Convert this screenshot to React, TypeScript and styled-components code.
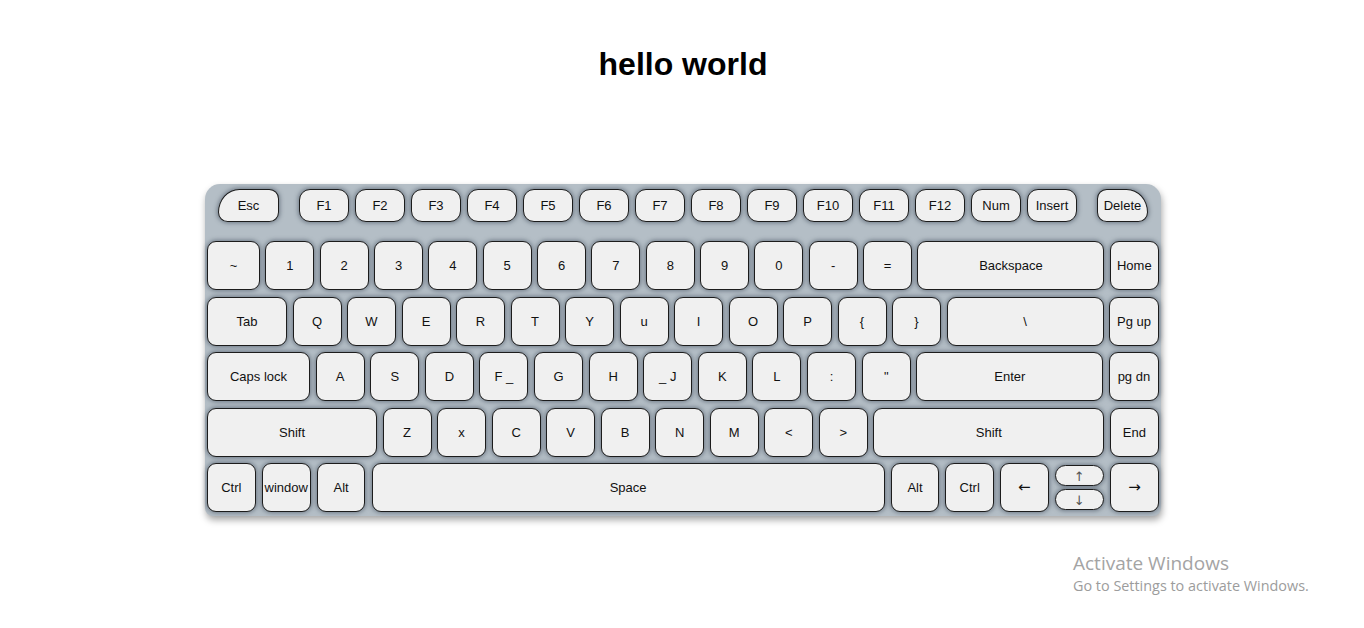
import React from "react";
import styled, { createGlobalStyle, css } from "styled-components";

const GlobalStyle = createGlobalStyle`
  html, body { margin: 0; padding: 0; background: #ffffff; }
  body { font-family: "Liberation Sans", Arial, sans-serif; color: #000; }
  * { box-sizing: border-box; }
`;

const Page = styled.div`
  position: relative;
  width: 100%;
  height: 628px;
  overflow: hidden;
  display: flex;
  flex-direction: column;
  align-items: center;
`;

const Title = styled.h1`
  margin: 46px 0 0 2px;
  font-size: 32px;
  line-height: 37px;
  font-weight: bold;
  color: #000;
`;

const Keyboard = styled.div`
  margin: 101px 0 0 2px;
  width: 956px;
  padding: 5px 2px 4px 2px;
  background: #b4bec6;
  border-radius: 15px 15px 8px 8px;
  box-shadow: 1px 4px 7px rgba(0, 0, 0, 0.35);
  display: flex;
  flex-direction: column;
`;

const FnRow = styled.div`
  display: flex;
  justify-content: space-between;
  align-items: center;
  height: 33px;
  padding: 0 11px;
`;

const FnGroup = styled.div`
  display: flex;
  gap: 6px;
`;

const MainRows = styled.div`
  margin-top: 19px;
  display: flex;
  flex-direction: column;
  gap: 6.5px;
`;

const Row = styled.div`
  display: flex;
  justify-content: space-between;
  align-items: stretch;
  height: 49px;
`;

type Shape = "fn" | "esc" | "del" | "main" | "pill";

const radii: Record<Shape, string> = {
  fn: "11px",
  esc: "22px 10px 10px 10px / 24px 10px 10px 10px",
  del: "10px 22px 10px 10px / 10px 24px 10px 10px",
  main: "9px",
  pill: "11px",
};

const Key = styled.div<{ $w: number; $shape?: Shape; $arrow?: boolean }>`
  flex: 0 0 auto;
  width: ${(p) => p.$w}px;
  display: flex;
  align-items: center;
  justify-content: center;
  background: #f0f0f0;
  border: 1px solid #1c1c1c;
  border-radius: ${(p) => radii[p.$shape ?? "main"]};
  box-shadow: 0 0 4px 1px rgba(66, 78, 94, 0.6);
  font-size: 13px;
  line-height: 15px;
  color: #111;
  white-space: nowrap;
  ${(p) =>
    (p.$shape === "fn" || p.$shape === "esc" || p.$shape === "del") &&
    css`
      height: 33px;
    `}
  ${(p) =>
    p.$arrow &&
    css`
      font-family: "DejaVu Sans", sans-serif;
      font-size: 15px;
    `}
  ${(p) =>
    p.$shape === "pill" &&
    css`
      height: 21px;
      font-family: "DejaVu Sans", sans-serif;
      font-size: 13px;
      color: #555;
      padding-top: 2px;
    `}
`;

const ArrowStack = styled.div`
  flex: 0 0 auto;
  width: 49px;
  display: flex;
  flex-direction: column;
  justify-content: center;
  gap: 3px;
`;

const Watermark = styled.div`
  position: absolute;
  left: 1073px;
  top: 550px;
  font-family: "Open Sans", "Noto Sans", sans-serif;
  color: #a4a4a4;
  pointer-events: none;
`;

const WatermarkTitle = styled.div`
  font-size: 19px;
  line-height: 26px;
`;

const WatermarkSub = styled.div`
  font-size: 14.4px;
  line-height: 20px;
  color: #9c9c9c;
`;

type K = [string, number];

const row2: K[] = [
  ["~", 53],
  ["1", 49], ["2", 49], ["3", 49], ["4", 49], ["5", 49], ["6", 49],
  ["7", 49], ["8", 49], ["9", 49], ["0", 49], ["-", 49], ["=", 49],
  ["Backspace", 187],
  ["Home", 49],
];

const row3: K[] = [
  ["Tab", 80],
  ["Q", 49], ["W", 49], ["E", 49], ["R", 49], ["T", 49], ["Y", 49],
  ["u", 49], ["I", 49], ["O", 49], ["P", 49], ["{", 49], ["}", 49],
  ["\\", 157],
  ["Pg up", 50],
];

const row4: K[] = [
  ["Caps lock", 103],
  ["A", 49], ["S", 49], ["D", 49], ["F _", 49], ["G", 49], ["H", 49],
  ["_ J", 49], ["K", 49], ["L", 49], [":", 49], ['"', 49],
  ["Enter", 187],
  ["pg dn", 50],
];

const row5: K[] = [
  ["Shift", 170],
  ["Z", 49], ["x", 49], ["C", 49], ["V", 49], ["B", 49], ["N", 49],
  ["M", 49], ["<", 49], [">", 49],
  ["Shift", 231],
  ["End", 49],
];

const fnKeys = ["F1", "F2", "F3", "F4", "F5", "F6", "F7", "F8", "F9", "F10", "F11", "F12", "Num", "Insert"];

const KeyRow: React.FC<{ keys: K[] }> = ({ keys }) => (
  <Row>
    {keys.map(([label, w], i) => (
      <Key key={i} $w={w}>
        {label}
      </Key>
    ))}
  </Row>
);

export default function App() {
  return (
    <Page>
      <GlobalStyle />
      <Title>hello world</Title>
      <Keyboard>
        <FnRow>
          <Key $w={61} $shape="esc">Esc</Key>
          <FnGroup>
            {fnKeys.map((k) => (
              <Key key={k} $w={50} $shape="fn">
                {k}
              </Key>
            ))}
          </FnGroup>
          <Key $w={51} $shape="del">Delete</Key>
        </FnRow>
        <MainRows>
          <KeyRow keys={row2} />
          <KeyRow keys={row3} />
          <KeyRow keys={row4} />
          <KeyRow keys={row5} />
          <Row>
            <Key $w={48.5}>Ctrl</Key>
            <Key $w={49}>window</Key>
            <Key $w={48.5}>Alt</Key>
            <Key $w={513}>Space</Key>
            <Key $w={48.5}>Alt</Key>
            <Key $w={48.5}>Ctrl</Key>
            <Key $w={48.5} $arrow>←</Key>
            <ArrowStack>
              <Key $w={49} $shape="pill">↑</Key>
              <Key $w={49} $shape="pill">↓</Key>
            </ArrowStack>
            <Key $w={49} $arrow>→</Key>
          </Row>
        </MainRows>
      </Keyboard>
      <Watermark>
        <WatermarkTitle>Activate Windows</WatermarkTitle>
        <WatermarkSub>Go to Settings to activate Windows.</WatermarkSub>
      </Watermark>
    </Page>
  );
}
